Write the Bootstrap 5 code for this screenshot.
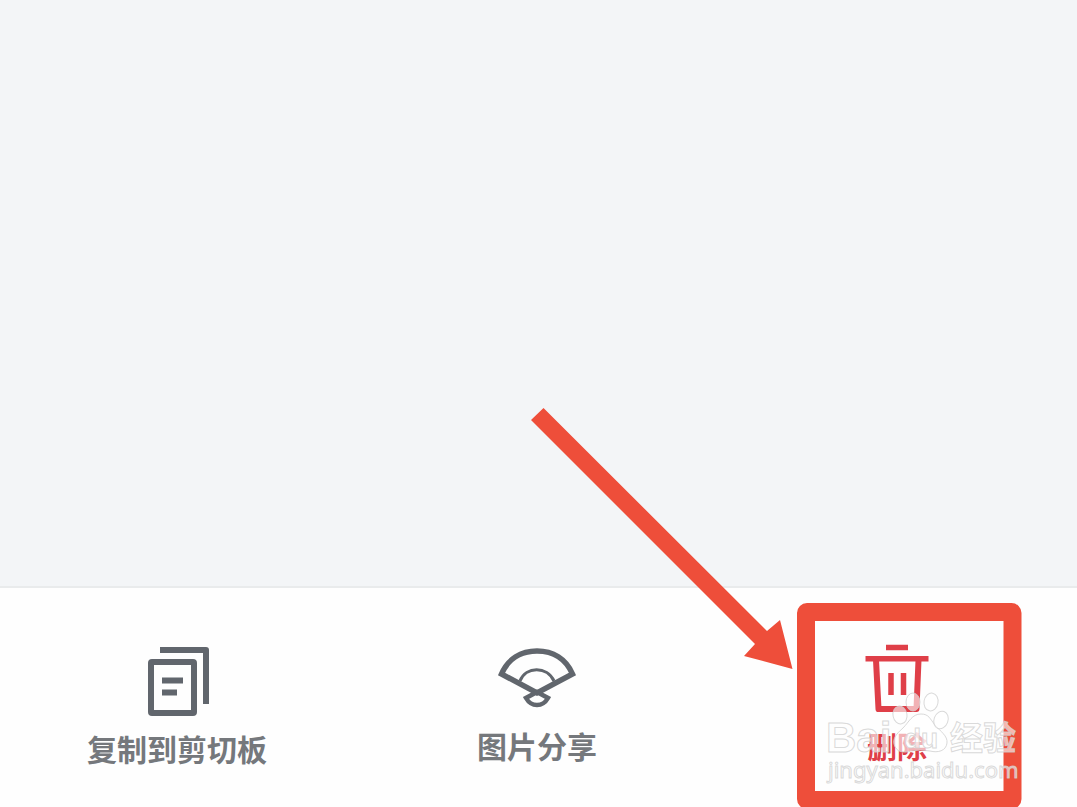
<!DOCTYPE html>
<html lang="zh-CN">
<head>
<meta charset="utf-8">
<meta name="viewport" content="width=device-width, initial-scale=1">
<title>删除</title>
<link href="https://cdn.jsdelivr.net/npm/bootstrap@5.3.0/dist/css/bootstrap.min.css" rel="stylesheet">
<style>
  body { background: #f3f5f7; font-family: "Liberation Sans", "Noto Sans CJK SC", sans-serif; }
  .toolbar { background: #fefefe; border-top: 2px solid #e9ebec; height: 221px; margin-left: -3px; }
  .tool { color: #75787c; font-size: 30px; line-height: 40px; font-weight: 700; padding-top: 56px; }
  .tool svg { color: #61666d; height: 76px; margin-bottom: 8px; }
  .tool-copy { line-height: 46px; }
  .tool-delete, .tool-delete svg { color: #df3f48; }
  .guide { right: 0; bottom: 0; pointer-events: none; }
  .stamp { fill: #fff; fill-opacity: .6; stroke: #d0d0d0; stroke-opacity: .8; stroke-width: 1px; }
  .stamp-latin { font: 700 42px "Liberation Sans", sans-serif; }
  .stamp-small { font: 700 28px "Liberation Sans", sans-serif; }
  .stamp-han { font: 700 33px "Noto Sans CJK SC", sans-serif; }
  .stamp-link { font: 400 22px "Noto Sans", sans-serif; }
</style>
</head>
<body>
<div class="d-flex flex-column min-vh-100 position-relative overflow-hidden">
  <main class="flex-grow-1"></main>
  <nav class="toolbar d-flex" aria-label="操作">
    <button type="button" class="tool tool-copy btn border-0 rounded-0 pb-0 px-0 flex-fill w-100 d-flex flex-column align-items-center justify-content-start">
      <svg width="80" height="76" viewBox="137 644 80 76" fill="none" stroke="currentColor" stroke-width="6" stroke-linejoin="round" aria-hidden="true">
        <rect x="151" y="662" width="43" height="51" rx="1"/>
        <path d="M160 650H206V704M162 680.500H183M162 692.500H177" />
      </svg>
      <span>复制到剪切板</span>
    </button>
    <button type="button" class="tool btn border-0 rounded-0 pb-0 px-0 flex-fill w-100 d-flex flex-column align-items-center justify-content-start">
      <svg width="80" height="76" viewBox="497 644 80 76" fill="none" stroke="currentColor" aria-hidden="true">
        <path stroke-width="5.500" d="M501.500 674C508 659 521 651 537 651C553 651 566 659 572.500 674L537 693Z"/>
        <path stroke-width="3" d="M520 681C526 666 547 666 554 681"/>
        <path stroke-width="4.500" d="M537 692L526 698Q530 705 537 705Q544 705 548 698Z"/>
      </svg>
      <span>图片分享</span>
    </button>
    <button type="button" class="tool tool-delete btn border-0 rounded-0 pb-0 px-0 flex-fill w-100 d-flex flex-column align-items-center justify-content-start">
      <svg width="80" height="76" viewBox="857 644 80 76" fill="none" stroke="currentColor" aria-hidden="true">
        <path stroke-width="5.500" d="M886 647.500H908M865.500 658.700H928.500"/>
        <path stroke-width="6" stroke-linejoin="round" d="M876 660L878.500 709H916.500L918.500 660"/>
        <path stroke-width="5.500" d="M891 673V695M903.500 673V695"/>
      </svg>
      <span>删除</span>
    </button>
  </nav>
  <svg class="guide position-absolute" width="557" height="407" viewBox="520 400 557 407" role="img" aria-label="Baidu 经验">
    <rect x="806" y="612" width="206.500" height="188" rx="1" fill="none" stroke="#ee4e3a" stroke-width="18" stroke-linejoin="round"/>
    <path fill="#ee4e3a" d="M543.500 408L767 631L780 620L792.500 669L744 656L755 644L531 420Z"/>
    <g class="stamp">
      <text class="stamp-latin" x="826" y="752">Bai</text>
      <path d="M921 714C912 714 909 722 903 728C895 735 893 739 894 744C896 753 905 753 911 751Q920 749 930 751C938 753 946 751 947 743C948 736 940 731 935 725C930 719 929 714 921 714Z"/>
      <ellipse cx="900" cy="715" rx="7" ry="9" transform="rotate(-10 900 715)"/>
      <ellipse cx="913" cy="702" rx="7" ry="9"/>
      <ellipse cx="931" cy="702" rx="7" ry="9" transform="rotate(10 931 702)"/>
      <ellipse cx="941" cy="720" rx="7" ry="9" transform="rotate(20 941 720)"/>
      <text class="stamp-small" x="904" y="748">du</text>
      <text class="stamp-han" x="950" y="750">经验</text>
      <text class="stamp-link" x="828" y="778">jingyan.baidu.com</text>
    </g>
  </svg>
</div>
<script src="https://cdn.jsdelivr.net/npm/bootstrap@5.3.0/dist/js/bootstrap.bundle.min.js"></script>
</body>
</html>
